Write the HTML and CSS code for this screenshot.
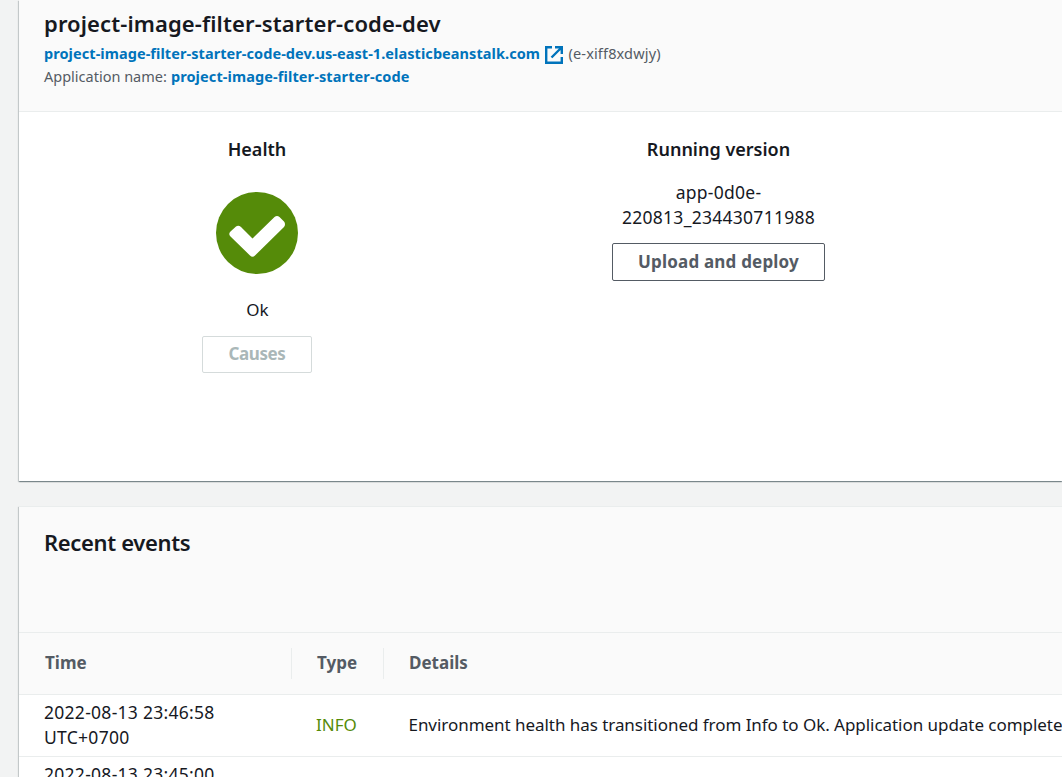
FILE: index.html
```html
<!DOCTYPE html>
<html lang="en">
<head>
<meta charset="utf-8">
<title>Environment overview</title>
<link rel="stylesheet" href="styles.css">
</head>
<body>
<main class="page">
  <section class="card overview">
    <header class="overview-header">
      <h1>project-image-filter-starter-code-dev</h1>
      <p class="meta"><a class="url">project-image-filter-starter-code-dev.us-east-1.elasticbeanstalk.com</a><svg class="external" viewBox="0 0 18 18"><path d="M7 1.200H1.200v15.600h15.600V11M10 1.200h6.800V8M16.500 1.500L6.500 11.500"/></svg><span class="env-id">(e-xiff8xdwjy)</span></p>
      <p class="meta"><span class="label">Application name:</span><a class="app">project-image-filter-starter-code</a></p>
    </header>
    <div class="overview-body">
      <div class="column health">
        <h3>Health</h3>
        <svg class="status" viewBox="0 0 82 82"><circle cx="41" cy="41" r="41"/><path d="M14.500 39.500L20 34.500Q22.500 33 25 35L36.500 46.500L58.500 25Q61 23 63.500 25L68 29.500Q70 32 68 35L39 63.500Q36.500 66 34 63.500L14.500 44.500Q12 42 14.500 39.500Z"/></svg>
        <p class="state">Ok</p>
        <button class="button causes" disabled>Causes</button>
      </div>
      <div class="column version">
        <h3>Running version</h3>
        <p class="version-label">app-0d0e-<br>220813_234430711988</p>
        <button class="button deploy">Upload and deploy</button>
      </div>
    </div>
  </section>
  <section class="card events">
    <header class="events-header"><h2>Recent events</h2></header>
    <div class="row head">
      <div class="cell time">Time</div>
      <div class="cell type">Type</div>
      <div class="cell details">Details</div>
    </div>
    <div class="row">
      <div class="cell time">2022-08-13 23:46:58<br>UTC+0700</div>
      <div class="cell type info">INFO</div>
      <div class="cell details">Environment health has transitioned from Info to Ok. Application update complete</div>
    </div>
    <div class="row">
      <div class="cell time">2022-08-13 23:45:00</div>
    </div>
  </section>
</main>
</body>
</html>
```
FILE: styles.css
```css
* { box-sizing: border-box; }
body { margin: 0; background: #f2f3f3; color: #16191f; font: 17px/25px "Noto Sans", sans-serif; overflow: hidden; height: 777px; }
h1, h2, h3, p { margin: 0; }
.page { display: flex; flex-direction: column; gap: 25px; padding-left: 19px; height: 777px; overflow: hidden; }
.card { flex: none; background: #fff; box-shadow: 0 1px 1px 0 rgba(0,28,36,.3), 1px 1px 1px 0 rgba(0,28,36,.15), -1px 1px 1px 0 rgba(0,28,36,.15); }
.overview { height: 481px; }
.overview-header { height: 112px; padding: 8px 25px 0; background: #fafafa; border-bottom: 1px solid #eaeded; }
h1 { font-size: 22px; line-height: 30px; font-weight: 600; letter-spacing: .11px; margin-bottom: 4px; }
.meta { display: flex; align-items: center; height: 23px; font-size: 14.500px; color: #545b64; white-space: pre; }
.meta a { color: #0073bb; font-weight: 700; }
.url { letter-spacing: .067px; }
.app { letter-spacing: .11px; margin-left: 4px; }
.env-id { letter-spacing: .15px; }
.external { width: 18px; height: 18px; margin: 3px 5.500px 0 5px; fill: none; stroke: #0073bb; stroke-width: 2.400; }
.overview-body { display: flex; padding-top: 24px; }
.column { display: flex; flex-direction: column; align-items: center; text-align: center; }
.health { width: 476px; }
.version { width: 447px; }
h3 { font-size: 18px; line-height: 27px; font-weight: 600; }
.status { width: 82px; height: 82px; margin-top: 29px; fill: #558b09; }
.status path { fill: #fff; }
.state { margin-top: 23px; padding-left: 1px; }
.version-label { margin-top: 17px; font-size: 17.500px; letter-spacing: .27px; }
.button { background: #fff; border: 1px solid #545b64; border-radius: 2px; color: #545b64; font: 700 17px/25px "Noto Sans", sans-serif; padding: 0 0 2px; height: 38px; }
.causes { width: 110px; height: 37px; margin-top: 14px; border-color: #d5dbdb; color: #aab7b8; letter-spacing: -.4px; }
.deploy { width: 213px; margin-top: 13px; letter-spacing: .19px; }
.events-header { height: 127px; padding: 21px 25px 0; background: #fafafa; border-top: 1px solid #eaeded; border-bottom: 1px solid #eaeded; }
h2 { font-size: 22px; line-height: 28px; font-weight: 600; letter-spacing: -.35px; }
.row { display: flex; align-items: center; height: 62px; padding-bottom: 2px; border-bottom: 1px solid #eaeded; white-space: nowrap; }
.head { background: #fafafa; color: #545b64; font-weight: 700; padding-bottom: 0; }
.cell { flex: none; }
.time { width: 273px; padding-left: 25px; font-size: 17.500px; letter-spacing: .28px; }
.type { width: 92px; padding-left: 24px; }
.details { padding-left: 24.500px; letter-spacing: -.045px; }
.info { color: #558b09; }
.head .cell { height: 31px; line-height: 29px; padding-left: 26px; font-size: 17px; letter-spacing: 0; }
.head .type, .head .details { padding-left: 25px; }
.head .time, .head .type { border-right: 1px solid #eaeded; }
.row:last-child { align-items: flex-start; padding-top: 5px; }
```
